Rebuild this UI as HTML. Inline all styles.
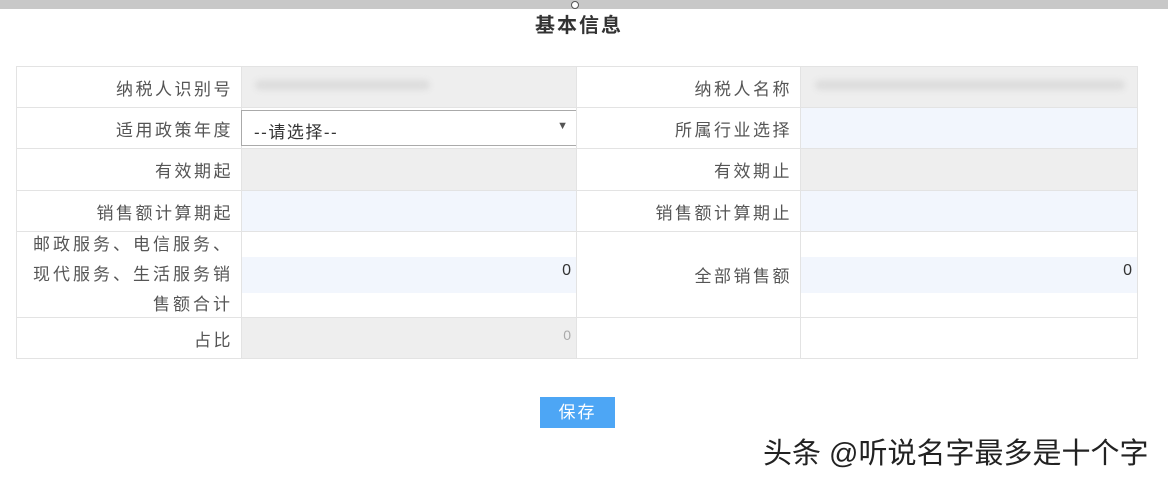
<!DOCTYPE html><html><head><meta charset="utf-8"><style>
body{margin:0;width:1168px;height:480px;background:#fff;position:relative;overflow:hidden;font-family:"Liberation Sans","Noto Sans CJK SC",sans-serif;color:#555}
.a{position:absolute;box-sizing:border-box}
.l{border:1px solid #e3e3e3;text-align:right;padding-right:8px;font-size:17px;letter-spacing:2.5px;display:flex;align-items:center;justify-content:flex-end}
.g{background:#eeeeee}.b{background:#f2f6fd}
</style></head><body>
<div class="a" style="left:0;top:0;width:1168px;height:9px;background:#c8c8c8"></div>
<div class="a" style="left:571px;top:1px;width:8px;height:8px;border:1.5px solid #555;border-radius:50%;background:#fff"></div>
<div class="a" style="left:535px;top:9px;width:90px;font-size:20px;font-weight:bold;color:#333;letter-spacing:2px">基本信息</div>
<div class="a l" style="left:16px;top:66px;width:226px;height:42px">纳税人识别号</div>
<div class="a g" style="left:241px;top:66px;width:336px;height:42px;border:1px solid #e3e3e3"></div>
<div class="a" style="left:255px;top:80px;width:175px;height:10px;background:#ddd;border-radius:5px;filter:blur(3px)"></div>
<div class="a l" style="left:576px;top:66px;width:225px;height:42px">纳税人名称</div>
<div class="a g" style="left:800px;top:66px;width:338px;height:42px;border:1px solid #e3e3e3"></div>
<div class="a" style="left:815px;top:80px;width:310px;height:10px;background:#ddd;border-radius:5px;filter:blur(3px)"></div>

<div class="a l" style="left:16px;top:107px;width:226px;height:42px">适用政策年度</div>
<div class="a" style="left:241px;top:110px;width:336px;height:36px;border:1px solid #aaa;background:#fff;font-size:17px;letter-spacing:1.5px;color:#333;padding:7px 12px">--请选择--<span style="position:absolute;right:8px;top:9px;font-size:11px;color:#555;letter-spacing:0">▼</span></div>
<div class="a l" style="left:576px;top:107px;width:225px;height:42px">所属行业选择</div>
<div class="a b" style="left:800px;top:107px;width:338px;height:42px;border:1px solid #e3e3e3"></div>

<div class="a l" style="left:16px;top:148px;width:226px;height:43px">有效期起</div>
<div class="a g" style="left:241px;top:148px;width:336px;height:43px;border:1px solid #e3e3e3"></div>
<div class="a l" style="left:576px;top:148px;width:225px;height:43px">有效期止</div>
<div class="a g" style="left:800px;top:148px;width:338px;height:43px;border:1px solid #e3e3e3"></div>

<div class="a l" style="left:16px;top:190px;width:226px;height:42px">销售额计算期起</div>
<div class="a b" style="left:241px;top:190px;width:336px;height:42px;border:1px solid #e3e3e3"></div>
<div class="a l" style="left:576px;top:190px;width:225px;height:42px">销售额计算期止</div>
<div class="a b" style="left:800px;top:190px;width:338px;height:42px;border:1px solid #e3e3e3"></div>

<div class="a l" style="left:16px;top:231px;width:226px;height:87px;line-height:30px;padding-left:14px;letter-spacing:3px">邮政服务、电信服务、现代服务、生活服务销售额合计</div>
<div class="a" style="left:241px;top:231px;width:336px;height:87px;border:1px solid #e3e3e3"></div>
<div class="a b" style="left:242px;top:257px;width:334px;height:36px;text-align:right;padding:5px 5px;font-size:16px;color:#333">0</div>
<div class="a l" style="left:576px;top:231px;width:225px;height:87px">全部销售额</div>
<div class="a" style="left:800px;top:231px;width:338px;height:87px;border:1px solid #e3e3e3"></div>
<div class="a b" style="left:801px;top:257px;width:336px;height:36px;text-align:right;padding:5px 5px;font-size:16px;color:#333">0</div>

<div class="a l" style="left:16px;top:317px;width:226px;height:42px">占比</div>
<div class="a g" style="left:241px;top:317px;width:336px;height:42px;border:1px solid #e3e3e3;text-align:right;padding:9px 5px;font-size:14px;color:#aaa">0</div>
<div class="a" style="left:576px;top:317px;width:225px;height:42px;border:1px solid #e3e3e3"></div>
<div class="a" style="left:800px;top:317px;width:338px;height:42px;border:1px solid #e3e3e3"></div>

<div class="a" style="left:540px;top:397px;width:75px;height:31px;background:#4da6f5;color:#fff;font-size:17px;letter-spacing:2px;text-align:center;line-height:31px">保存</div>
<div class="a" style="left:763px;top:430px;font-size:29px;color:#222;white-space:nowrap;letter-spacing:0">头条 @听说名字最多是十个字</div>
</body></html>
